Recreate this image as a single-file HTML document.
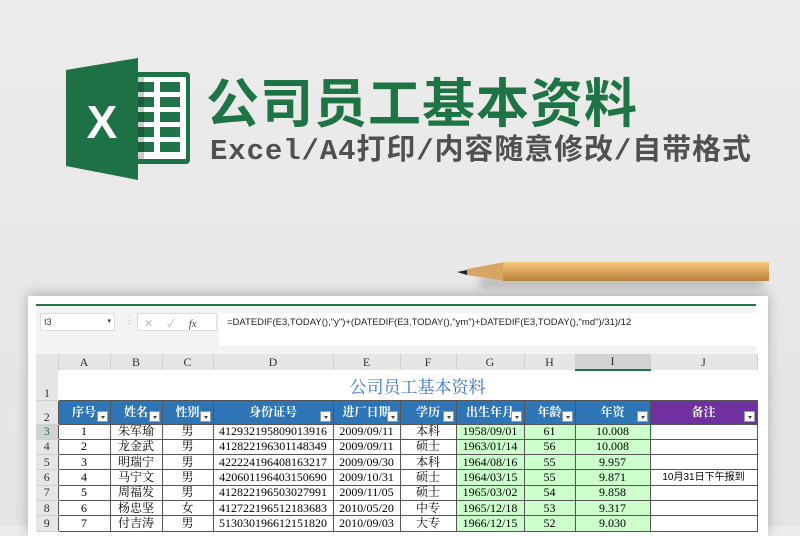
<!DOCTYPE html>
<html><head><meta charset="utf-8"><style>
*{margin:0;padding:0;box-sizing:border-box}
body{width:800px;height:526px;overflow:hidden;background:linear-gradient(#ececec,#e4e4e4);position:relative;font-family:"Liberation Sans","Noto Sans CJK SC",sans-serif}
.abs{position:absolute}
.t1{left:206px;top:68px;font-size:53px;font-weight:bold;color:#1e7444;letter-spacing:1px;font-family:"Noto Sans CJK SC",sans-serif;line-height:64px;white-space:nowrap}
.t2{left:210px;top:132px;font-size:29px;color:#505050;font-family:"Liberation Mono","Noto Sans CJK SC",monospace;letter-spacing:0.9px;line-height:40px;white-space:nowrap;font-weight:bold}
.card{left:28px;top:296px;width:740px;height:240px;background:#fff;box-shadow:0 -2px 12px rgba(0,0,0,.25)}
.grid{border-collapse:collapse;position:absolute;left:36px;top:354px;font-family:"Liberation Serif","Noto Serif CJK SC",serif;font-size:12px;table-layout:fixed}
.grid td{height:15.3px;border:1px solid #555;text-align:center;padding:0;line-height:13px;white-space:nowrap;overflow:hidden}
.grid tr.ch td{background:#e6e6e6;border:none;border-right:1px solid #d0d0d0;color:#333;height:16px}
.grid td.rh{background:#e6e6e6;border:none;border-bottom:1px solid #d0d0d0;color:#333;font-size:12px}
.grid tr.hd td{background:#2e75b6;color:#fff;font-weight:bold;font-size:12px;height:24px;position:relative}
.grid tr.hd td.pu{background:#7030a0}
.dd{position:absolute;right:2px;bottom:2px;width:11px;height:11px;background:#fff;border:1px solid #999}
.dd:after{content:"";position:absolute;left:3px;top:4px;border:2px solid transparent;border-top:3px solid #444}
.g{background:#ccffcc}
</style></head><body>
<svg class="abs" style="left:66px;top:58px" width="128" height="122" viewBox="0 0 128 122">
<rect x="60" y="14" width="64" height="92" rx="4" fill="#1e7145"/>
<rect x="66" y="19" width="54" height="82" fill="#fff"/>
<g fill="#21734a">
<rect x="70" y="24" width="18" height="10"/><rect x="94" y="24" width="20" height="10"/>
<rect x="70" y="39" width="18" height="10"/><rect x="94" y="39" width="20" height="10"/>
<rect x="70" y="54" width="18" height="10"/><rect x="94" y="54" width="20" height="10"/>
<rect x="70" y="69" width="18" height="10"/><rect x="94" y="69" width="20" height="10"/>
<rect x="70" y="84" width="18" height="10"/><rect x="94" y="84" width="20" height="10"/>
</g>
<rect x="70" y="19" width="8" height="82" fill="rgba(0,0,0,.2)"/>
<polygon points="0,12 72,0 72,122 0,108" fill="#1e7145"/>
<text x="36" y="80" font-family="Liberation Sans" font-weight="bold" font-size="46" fill="#fff" text-anchor="middle">X</text>
</svg>
<div class="abs t1">公司员工基本资料</div>
<div class="abs t2">Excel/A4打印/内容随意修改/自带格式</div>
<div class="abs" style="left:480px;top:276px;width:282px;height:12px;background:rgba(0,0,0,.18);filter:blur(4px)"></div>
<svg class="abs" style="left:455px;top:261px" width="315" height="22">
<defs><linearGradient id="w" x1="0" y1="0" x2="0" y2="1"><stop offset="0" stop-color="#f2c77e"/><stop offset=".5" stop-color="#dba45a"/><stop offset="1" stop-color="#b98240"/></linearGradient></defs>
<polygon points="2,11 12,9 12,14" fill="#222"/>
<polygon points="12,8 50,1 50,20 12,14" fill="#d9a565"/>
<rect x="48" y="1" width="266" height="19" fill="url(#w)"/>
</svg>
<div class="abs card"></div>
<div class="abs" style="left:36px;top:304px;width:720px;height:2px;background:#217346"></div>
<div class="abs" style="left:36px;top:306px;width:720px;height:48px;background:#f3f3f3"></div>
<div class="abs" style="left:40px;top:313px;width:75px;height:18px;background:#fff;border:1px solid #ddd;font-size:9px;color:#333;padding:3px 3px">I3<span style="float:right;font-size:7px">▾</span></div>
<div class="abs" style="left:125px;top:315px;font-size:9px;color:#aaa">⋮</div>
<div class="abs" style="left:137px;top:313px;width:80px;height:18px;background:#fff;border:1px solid #ddd;font-size:11px;color:#bbb;padding:1px 6px;letter-spacing:14px">✕✓<i style="color:#444;font-family:Liberation Serif;letter-spacing:0">fx</i></div>
<div class="abs" style="left:219px;top:313px;width:540px;height:33px;background:#fff;font-size:9.5px;color:#222;padding:4px 8px">=DATEDIF(E3,TODAY(),"y")+(DATEDIF(E3,TODAY(),"ym")+DATEDIF(E3,TODAY(),"md")/31)/12</div>
<table class="grid">
<colgroup><col style="width:22px"><col style="width:52px"><col style="width:52px"><col style="width:51px"><col style="width:120px"><col style="width:67px"><col style="width:56px"><col style="width:68px"><col style="width:51px"><col style="width:75px"><col style="width:107px"></colgroup>
<tr class="ch"><td style="background:#e6e6e6"></td><td>A</td><td>B</td><td>C</td><td>D</td><td>E</td><td>F</td><td>G</td><td>H</td><td style="background:#d2d2d2;border-bottom:2px solid #217346">I</td><td>J</td></tr>
<tr><td class="rh" style="height:30px;vertical-align:bottom">1</td><td colspan="10" style="border:none;height:30px;color:#2e6fd0;font-size:17px;font-family:'Noto Serif CJK SC',serif;text-align:center;padding-left:20px">公司员工基本资料</td></tr>
<tr class="hd"><td class="rh" style="background:#e6e6e6;color:#333;font-weight:normal;vertical-align:bottom">2</td><td>序号<i class="dd"></i></td><td>姓名<i class="dd"></i></td><td>性别<i class="dd"></i></td><td>身份证号<i class="dd"></i></td><td>进厂日期<i class="dd"></i></td><td>学历<i class="dd"></i></td><td>出生年月<i class="dd"></i></td><td>年龄<i class="dd"></i></td><td>年资<i class="dd"></i></td><td class="pu">备注<i class="dd"></i></td></tr>
<tr><td class="rh" style="color:#217346;background:#d2d2d2">3</td><td>1</td><td>朱军瑜</td><td>男</td><td>412932195809013916</td><td>2009/09/11</td><td>本科</td><td class="g">1958/09/01</td><td class="g">61</td><td class="g" style="border:1.5px solid #217346">10.008</td><td></td></tr>
<tr><td class="rh">4</td><td>2</td><td>龙金武</td><td>男</td><td>412822196301148349</td><td>2009/09/11</td><td>硕士</td><td class="g">1963/01/14</td><td class="g">56</td><td class="g">10.008</td><td></td></tr>
<tr><td class="rh">5</td><td>3</td><td>明瑞宁</td><td>男</td><td>422224196408163217</td><td>2009/09/30</td><td>本科</td><td class="g">1964/08/16</td><td class="g">55</td><td class="g">9.957</td><td></td></tr>
<tr><td class="rh">6</td><td>4</td><td>马宁文</td><td>男</td><td>420601196403150690</td><td>2009/10/31</td><td>硕士</td><td class="g">1964/03/15</td><td class="g">55</td><td class="g">9.871</td><td style="font-family:'Liberation Sans','Noto Sans CJK SC',sans-serif;font-size:10px">10月31日下午报到</td></tr>
<tr><td class="rh">7</td><td>5</td><td>周福发</td><td>男</td><td>412822196503027991</td><td>2009/11/05</td><td>硕士</td><td class="g">1965/03/02</td><td class="g">54</td><td class="g">9.858</td><td></td></tr>
<tr><td class="rh">8</td><td>6</td><td>杨忠坚</td><td>女</td><td>412722196512183683</td><td>2010/05/20</td><td>中专</td><td class="g">1965/12/18</td><td class="g">53</td><td class="g">9.317</td><td></td></tr>
<tr><td class="rh">9</td><td>7</td><td>付吉涛</td><td>男</td><td>513030196612151820</td><td>2010/09/03</td><td>大专</td><td class="g">1966/12/15</td><td class="g">52</td><td class="g">9.030</td><td></td></tr>
</table>
</body></html>
